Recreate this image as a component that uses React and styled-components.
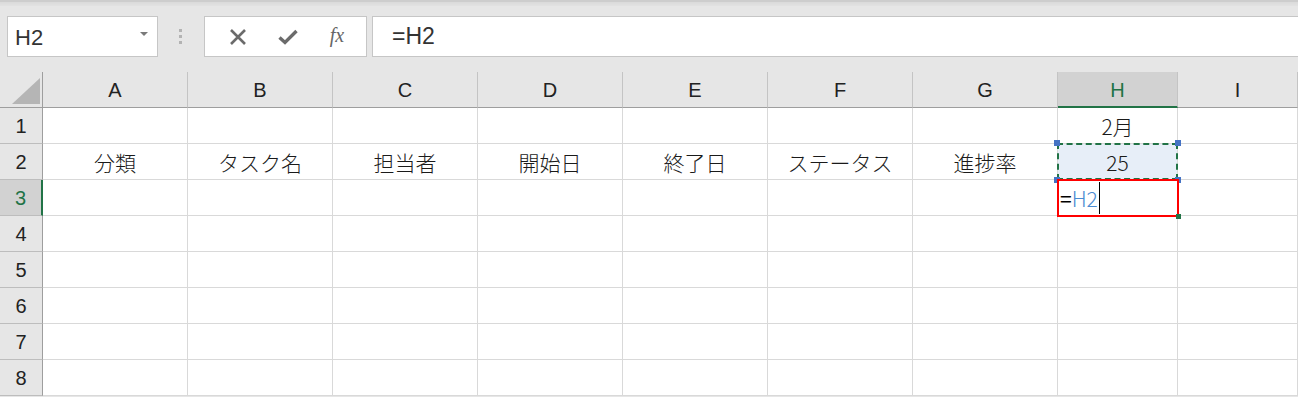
import React from "react";
import styled, { createGlobalStyle } from "styled-components";

const GREEN = "#217346";

const GlobalStyle = createGlobalStyle`
  html, body {
    margin: 0;
    padding: 0;
    background: #e6e6e6;
    overflow: hidden;
  }
  * { box-sizing: border-box; }
`;

const Page = styled.div`
  width: 1298px;
  height: 397px;
  background: #e6e6e6;
  font-family: "Liberation Sans", Arial, sans-serif;
  color: #222;
`;

const TopStrip = styled.div`
  height: 6px;
  background: linear-gradient(#cdcdcd 0, #cdcdcd 2px, #dadada 2px, #e2e2e2 6px);
`;

const FormulaRow = styled.div`
  display: flex;
  align-items: stretch;
  height: 41px;
  margin: 10px 0 15px 7px;
`;

const NameBox = styled.div`
  width: 151px;
  background: #fff;
  border: 1px solid #c6c6c6;
  display: flex;
  align-items: center;
  justify-content: space-between;
  padding: 0 9px 0 7px;
`;

const NameText = styled.span`
  font-size: 22px;
  color: #333;
  padding-top: 2px;
`;

const Caret = styled.span`
  width: 0;
  height: 0;
  border-left: 4px solid transparent;
  border-right: 4px solid transparent;
  border-top: 4px solid #7a7a7a;
  margin-top: -6px;
`;

const Grip = styled.div`
  width: 46px;
  display: flex;
  flex-direction: column;
  align-items: center;
  justify-content: center;
  gap: 3px;
  padding-right: 2px;
`;

const Dot = styled.span`
  width: 3px;
  height: 3px;
  background: #b3b3b3;
`;

const FuncBox = styled.div`
  width: 163px;
  background: #fff;
  border: 1px solid #c6c6c6;
  display: flex;
  align-items: center;
  justify-content: space-around;
  padding: 0 6px 0 8px;
`;

const FxText = styled.span`
  font-family: "Liberation Serif", "Times New Roman", serif;
  font-style: italic;
  font-size: 20px;
  color: #666;
  margin-top: -2px;
`;

const FormulaInput = styled.div`
  flex: 1;
  margin-left: 5px;
  background: #fff;
  border: 1px solid #c6c6c6;
  border-right: none;
  display: flex;
  align-items: center;
  padding-left: 19px;
  font-size: 23px;
  color: #333;
`;

const Sheet = styled.div`
  display: grid;
  grid-template-columns: 43px repeat(7, 145px) 120px 1fr;
  grid-auto-rows: 36px;
  background: #fff;
`;

const Corner = styled.div`
  background: #e6e6e6;
  border-right: 1px solid #9e9e9e;
  border-bottom: 1px solid #9e9e9e;
  display: flex;
  align-items: flex-end;
  justify-content: flex-end;
  padding: 0 2px 3px 0;
`;

const ColHead = styled.div`
  background: ${({ $active }) => ($active ? "#d2d2d2" : "#e6e6e6")};
  color: ${({ $active }) => ($active ? GREEN : "#222")};
  border-right: 1px solid #c4c4c4;
  border-bottom: ${({ $active }) => ($active ? `2px solid ${GREEN}` : "1px solid #9e9e9e")};
  display: flex;
  align-items: center;
  justify-content: center;
  font-size: 20px;
  padding-top: 2px;
`;

const RowHead = styled.div`
  background: ${({ $active }) => ($active ? "#d2d2d2" : "#e6e6e6")};
  color: ${({ $active }) => ($active ? GREEN : "#222")};
  border-right: ${({ $active }) => ($active ? `2px solid ${GREEN}` : "1px solid #9e9e9e")};
  border-bottom: 1px solid #bdbdbd;
  display: flex;
  align-items: center;
  justify-content: center;
  font-size: 20px;
  padding-top: 2px;
`;

const Cell = styled.div`
  position: relative;
  z-index: ${({ $layer }) => $layer || "auto"};
  background: ${({ $copy }) => ($copy ? "#e7eef8" : "#fff")};
  border-right: 1px solid #d9d9d9;
  border-bottom: 1px solid #d9d9d9;
  display: flex;
  align-items: center;
  justify-content: ${({ $editing }) => ($editing ? "flex-start" : "center")};
  padding-left: ${({ $editing }) => ($editing ? "2px" : "0")};
  font-family: "Noto Sans CJK JP", "Liberation Sans", sans-serif;
  font-weight: 300;
  font-size: 21px;
  color: #1a1a1a;
`;

const Marquee = styled.div`
  position: absolute;
  left: -1px;
  top: -1px;
  right: -1px;
  bottom: -1px;
  border: 2px dashed ${GREEN};
  pointer-events: none;
`;

const Handle = styled.span`
  position: absolute;
  width: 6px;
  height: 6px;
  background: #4472c4;
  ${({ $x }) => ($x === "l" ? "left: -4px;" : "right: -4px;")}
  ${({ $y }) => ($y === "t" ? "top: -4px;" : "bottom: -4px;")}
`;

const EditFrame = styled.div`
  position: absolute;
  left: -1px;
  top: -1px;
  right: -2px;
  bottom: -2px;
  border: 2px solid #ff0000;
  pointer-events: none;
`;

const FillHandle = styled.span`
  position: absolute;
  right: -4px;
  bottom: -4px;
  width: 5px;
  height: 5px;
  background: ${GREEN};
`;

const Equals = styled.span`
  color: #000;
  font-weight: 400;
`;

const RefText = styled.span`
  color: #4a8bd2;
`;

const TextCursor = styled.span`
  display: inline-block;
  width: 1px;
  height: 32px;
  background: #000;
  margin-left: 1px;
`;

const XIcon = () => (
  <svg width="18" height="18" viewBox="0 0 18 18">
    <path d="M2 2 L16 16 M16 2 L2 16" stroke="#6b6b6b" strokeWidth="2.6" fill="none" />
  </svg>
);

const CheckIcon = () => (
  <svg width="20" height="16" viewBox="0 0 20 16">
    <path d="M1.5 8.5 L7 13.5 L18.5 2" stroke="#6b6b6b" strokeWidth="3.4" fill="none" />
  </svg>
);

const CornerTriangle = () => (
  <svg width="28" height="26" viewBox="0 0 28 26">
    <path d="M28 0 L28 26 L0 26 Z" fill="#b5b5b5" />
  </svg>
);

const COLS = ["A", "B", "C", "D", "E", "F", "G", "H", "I"];

const DATA = {
  1: { H: "2月" },
  2: { A: "分類", B: "タスク名", C: "担当者", D: "開始日", E: "終了日", F: "ステータス", G: "進捗率", H: "25" },
};

const renderCell = (row, col) => {
  const key = `${col}${row}`;
  if (key === "H2") {
    return (
      <Cell key={key} $copy $layer={1}>
        {DATA[2].H}
        <Marquee />
        <Handle $x="l" $y="t" />
        <Handle $x="r" $y="t" />
        <Handle $x="l" $y="b" />
        <Handle $x="r" $y="b" />
      </Cell>
    );
  }
  if (key === "H3") {
    return (
      <Cell key={key} $editing $layer={2}>
        <Equals>=</Equals>
        <RefText>H2</RefText>
        <TextCursor />
        <EditFrame />
        <FillHandle />
      </Cell>
    );
  }
  return <Cell key={key}>{DATA[row]?.[col] || ""}</Cell>;
};

export default function App() {
  const rows = [1, 2, 3, 4, 5, 6, 7, 8];
  return (
    <Page>
      <GlobalStyle />
      <TopStrip />
      <FormulaRow>
        <NameBox>
          <NameText>H2</NameText>
          <Caret />
        </NameBox>
        <Grip>
          <Dot />
          <Dot />
          <Dot />
        </Grip>
        <FuncBox>
          <XIcon />
          <CheckIcon />
          <FxText>fx</FxText>
        </FuncBox>
        <FormulaInput>=H2</FormulaInput>
      </FormulaRow>
      <Sheet>
        <Corner>
          <CornerTriangle />
        </Corner>
        {COLS.map((c) => (
          <ColHead key={c} $active={c === "H"}>
            {c}
          </ColHead>
        ))}
        {rows.map((r) => (
          <React.Fragment key={r}>
            <RowHead $active={r === 3}>{r}</RowHead>
            {COLS.map((c) => renderCell(r, c))}
          </React.Fragment>
        ))}
      </Sheet>
    </Page>
  );
}
